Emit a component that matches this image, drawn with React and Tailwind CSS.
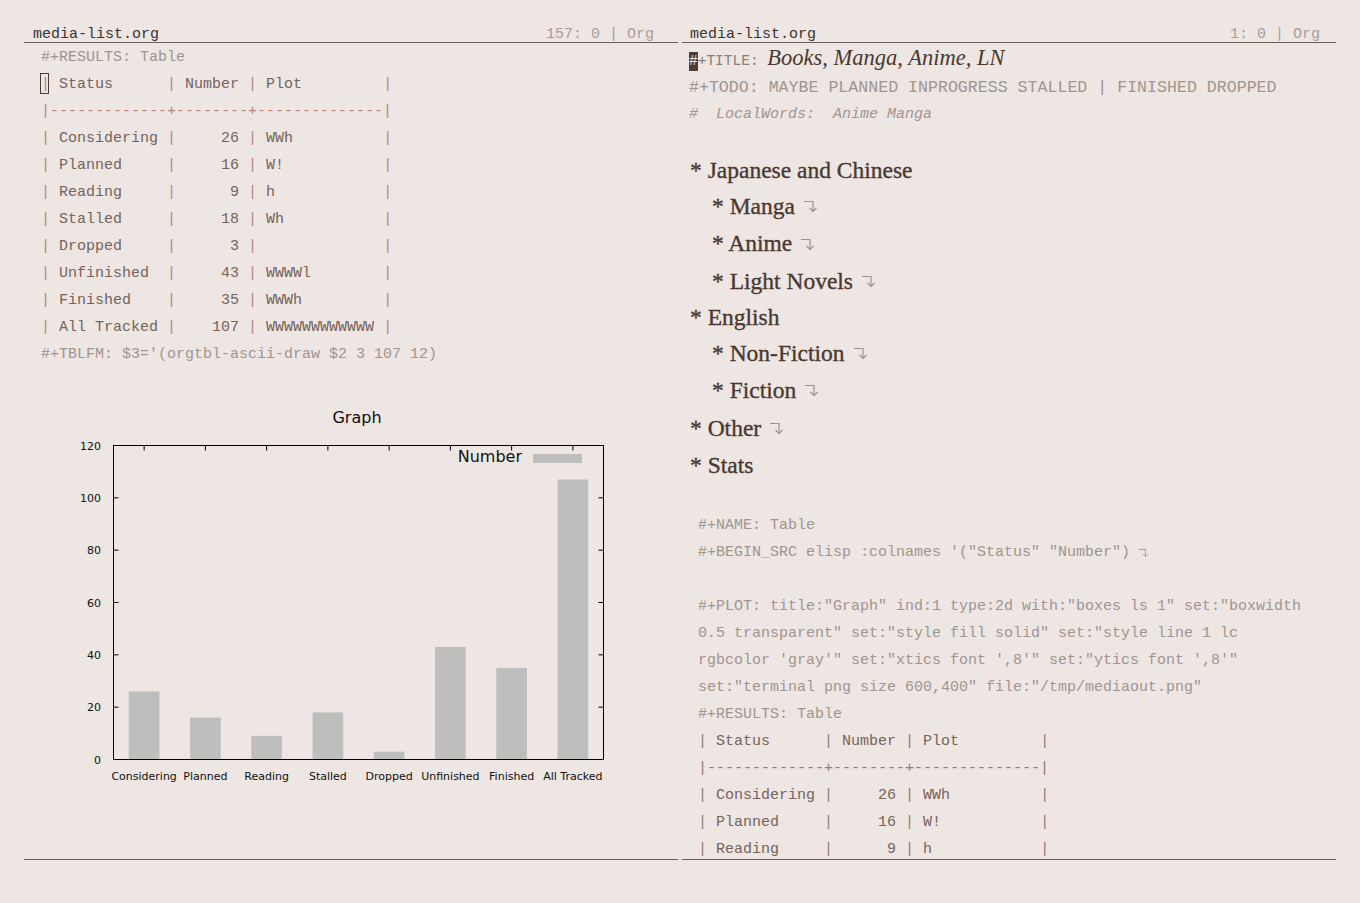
const rows = [
  ["Considering", 26, "WWh"],
  ["Planned", 16, "W!"],
  ["Reading", 9, "h"],
  ["Stalled", 18, "Wh"],
  ["Dropped", 3, ""],
  ["Unfinished", 43, "WWWWl"],
  ["Finished", 35, "WWWh"],
  ["All Tracked", 107, "WWWWWWWWWWWW"],
];

const mono = "font-['Liberation_Mono',monospace]";
const serif = "font-['Liberation_Serif',serif]";

const TableRow = ({ cells, cursor, pipe }) => {
  const Pipe = () => <span className={pipe}>|</span>;
  return (
    <div className="h-[27px] leading-[27px] whitespace-pre text-[#76635b]">
      {cursor ? (
        <span className="relative">
          <Pipe />
          <span className="absolute left-[-1px] top-[-3px] h-[21px] w-[9px] border border-[#4a3c36]" />
        </span>
      ) : (
        <Pipe />
      )}
      {` ${cells[0]} `}
      <Pipe />
      {` ${cells[1]} `}
      <Pipe />
      {` ${cells[2]} `}
      <Pipe />
    </div>
  );
};

const Table = ({ cursor = false, rowCount = rows.length, pipe = "text-[#b8857f]" }) => (
  <>
    <TableRow
      cursor={cursor}
      pipe={pipe}
      cells={["Status".padEnd(11), "Number", "Plot".padEnd(12)]}
    />
    <div className={`h-[27px] leading-[27px] whitespace-pre ${pipe}`}>
      |-------------+--------+--------------|
    </div>
    {rows.slice(0, rowCount).map(([name, num, plot]) => (
      <TableRow
        key={name}
        pipe={pipe}
        cells={[name.padEnd(11), String(num).padStart(6), plot.padEnd(12)]}
      />
    ))}
  </>
);

const Meta = ({ children, className = "" }) => (
  <div className={`h-[27px] leading-[27px] whitespace-pre text-[#a0958f] ${className}`}>
    {children}
  </div>
);

const Fold = ({ small }) => (
  <svg
    width={small ? 11 : 15}
    height={small ? 10 : 13}
    viewBox="0 0 15 13"
    className="ml-[8px] inline-block"
    fill="none"
    stroke="#9d928d"
    strokeWidth="1.2"
  >
    <path d="M1 1.5 H10 V11.5" />
    <path d="M6.5 8 L10 11.5 L13.5 8" />
  </svg>
);

const Heading = ({ level, title, fold, h }) => (
  <div
    className={`flex items-center ${serif} text-[23.5px] text-[#4a3830] [-webkit-text-stroke:0.35px_#4a3830] ${
      level === 1 ? "pl-[8px]" : "pl-[30px]"
    } ${h}`}
  >
    <span className="whitespace-pre">{`* ${title}`}</span>
    {fold && <Fold />}
  </div>
);

const Chart = () => {
  const X = (x) => x - 24;
  const Y = (y) => y - 368;
  const left = 113.5;
  const right = 603.5;
  const top = 445.5;
  const bottom = 759.5;
  const scale = (bottom - top) / 120;
  const slot = (right - left) / rows.length;

  return (
    <svg width="654" height="449" className="block">
      <g fontFamily="'DejaVu Sans', sans-serif" fill="#111">
        <text x={X(357)} y={Y(423)} fontSize="16" textAnchor="middle">
          Graph
        </text>
        {[0, 20, 40, 60, 80, 100, 120].map((v) => {
          const y = bottom - v * scale;
          return (
            <g key={v}>
              <text x={X(101)} y={Y(y + 4)} fontSize="11" textAnchor="end">
                {v}
              </text>
              <line x1={X(left)} x2={X(left + 5)} y1={Y(y)} y2={Y(y)} stroke="#000" />
              <line x1={X(right - 5)} x2={X(right)} y1={Y(y)} y2={Y(y)} stroke="#000" />
            </g>
          );
        })}
        {rows.map(([name, num], i) => {
          const cx = left + slot * (i + 0.5);
          const w = slot / 2;
          return (
            <g key={name}>
              <rect
                x={X(cx - w / 2)}
                y={Y(bottom - num * scale)}
                width={w}
                height={num * scale}
                fill="#bebebe"
              />
              <line x1={X(cx)} x2={X(cx)} y1={Y(top)} y2={Y(top + 5)} stroke="#000" />
              <text x={X(cx)} y={Y(780)} fontSize="11" textAnchor="middle">
                {name}
              </text>
            </g>
          );
        })}
        <rect
          x={X(left)}
          y={Y(top)}
          width={right - left}
          height={bottom - top}
          fill="none"
          stroke="#000"
        />
        <text x={X(522)} y={Y(462)} fontSize="16" textAnchor="end">
          Number
        </text>
        <rect x={X(533)} y={Y(454)} width="49" height="9" fill="#bebebe" />
      </g>
    </svg>
  );
};

const PaneHeader = ({ status, className }) => (
  <div
    className={`flex h-[19px] items-end justify-between border-b border-[#6a5f5b] text-[15px] leading-[15px] ${className}`}
  >
    <span className="text-[#3b3331]">media-list.org</span>
    <span className="whitespace-pre text-[#a89d99]">{status}</span>
  </div>
);

export default function App() {
  return (
    <div className={`flex h-[903px] w-[1360px] gap-[4px] bg-[#ede6e3] px-[24px] pt-[24px] ${mono} text-[15px]`}>
      <section className="w-[654px]">
        <PaneHeader status="157: 0 | Org" className="pl-[9px] pr-[24px]" />
        <div className="h-[817px] overflow-hidden border-b border-[#6a5f5b] pt-[1px]">
          <div className="pl-[17px]">
            <Meta>#+RESULTS: Table</Meta>
            <Table cursor />
            <Meta>#+TBLFM: $3='(orgtbl-ascii-draw $2 3 107 12)</Meta>
          </div>
          <Chart />
        </div>
      </section>

      <section className="w-[654px]">
        <PaneHeader status="1: 0 | Org" className="pl-[8px] pr-[16px]" />
        <div className="h-[817px] overflow-hidden border-b border-[#6a5f5b] pt-[1px]">
          <div className="flex h-[30px] items-baseline pl-[7px] leading-[28px]">
            <span className="bg-[#4a3c36] text-[14.5px] leading-[19px] text-[#ede6e3]">#</span>
            <span className="whitespace-pre text-[14.5px] text-[#8a7e79]">+TITLE: </span>
            <span className={`${serif} text-[22.5px] italic text-[#4a3830]`}>
              Books, Manga, Anime, LN
            </span>
          </div>
          <Meta className="pl-[7px] text-[16.6px]">
            #+TODO: MAYBE PLANNED INPROGRESS STALLED | FINISHED DROPPED
          </Meta>
          <Meta className="pl-[7px] italic">{"#  LocalWords:  Anime Manga"}</Meta>
          <div className="h-[26px]" />

          <Heading level={1} title="Japanese and Chinese" h="h-[34px]" />
          <Heading level={2} title="Manga" fold h="h-[37px]" />
          <Heading level={2} title="Anime" fold h="h-[38px]" />
          <Heading level={2} title="Light Novels" fold h="h-[37px]" />
          <Heading level={1} title="English" h="h-[35px]" />
          <Heading level={2} title="Non-Fiction" fold h="h-[37px]" />
          <Heading level={2} title="Fiction" fold h="h-[37px]" />
          <Heading level={1} title="Other" fold h="h-[39px]" />
          <Heading level={1} title="Stats" h="h-[36px]" />
          <div className="h-[28px]" />

          <div className="pl-[16px]">
            <Meta>#+NAME: Table</Meta>
            <Meta className="flex items-center">
              {`#+BEGIN_SRC elisp :colnames '("Status" "Number")`}
              <Fold small />
            </Meta>
            <div className="h-[27px]" />
            <Meta>{`#+PLOT: title:"Graph" ind:1 type:2d with:"boxes ls 1" set:"boxwidth`}</Meta>
            <Meta>{`0.5 transparent" set:"style fill solid" set:"style line 1 lc`}</Meta>
            <Meta>{`rgbcolor 'gray'" set:"xtics font ',8'" set:"ytics font ',8'"`}</Meta>
            <Meta>{`set:"terminal png size 600,400" file:"/tmp/mediaout.png"`}</Meta>
            <Meta>#+RESULTS: Table</Meta>
            <Table rowCount={3} pipe="text-[#8f7b74]" />
          </div>
        </div>
      </section>
    </div>
  );
}
